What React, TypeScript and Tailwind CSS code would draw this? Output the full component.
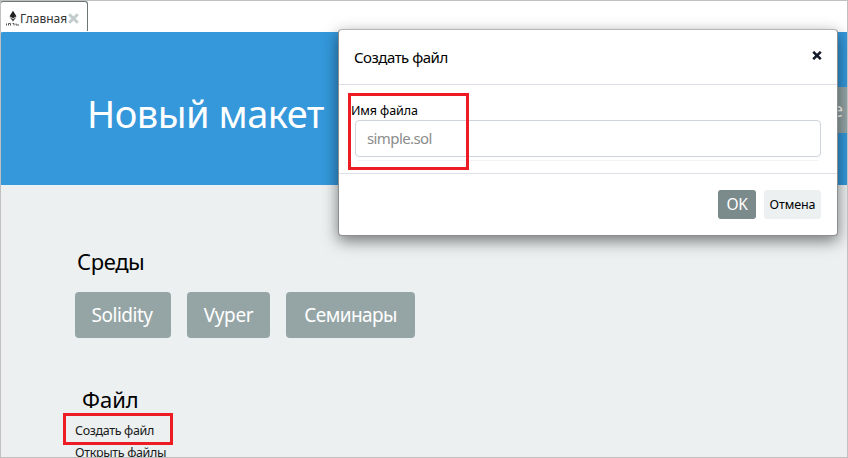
function TokenIcon() {
  return (
    <svg className="mt-[8px] h-[17px] w-[16px] shrink-0" viewBox="0 0 16 17">
      <path d="M8 0.8 L11.5 6.200 L8 8.200 L4.5 6.200 Z" fill="#222" />
      <path d="M4.5 7 L8 9.100 L11.5 7 L8 11.500 Z" fill="#444" />
      <path d="M1.500 13.500v2M3.500 15.500v-2h2v2M7.500 13.500h1.500v2M11 13.500v1.500h3" stroke="#444" strokeWidth="0.900" fill="none" />
    </svg>
  );
}

function Tab() {
  return (
    <div className="flex h-[30px] w-[88px] rounded-t-[3px] border border-b-0 border-[#6c7676] bg-white pl-[4px]">
      <TokenIcon />
      <span className="-ml-px mt-[7px] w-[48px] whitespace-nowrap text-[12px] leading-[20px] text-[#333]">Главная</span>
      <svg className="mt-[11px] h-[11px] w-[11px] shrink-0" viewBox="0 0 11 11">
        <path d="M1.200 1.200l8.600 8.600M9.800 1.200l-8.600 8.600" stroke="#c3cbcd" strokeWidth="2.900" />
      </svg>
    </div>
  );
}

function Dialog() {
  return (
    <div className="absolute left-[338px] top-[29px] flex h-[207px] w-[500px] flex-col rounded-[4px] border border-[#8b8d8e] border-t-[#b5b5b5] bg-white shadow-[0_5px_15px_rgba(0,0,0,0.500)]">
      <header className="flex h-[55px] shrink-0 justify-between border-b border-[#dde1e7] px-[15px]">
        <h2 className="mt-[15px] text-[15px] leading-[24px] tracking-[-0.5px]">Создать файл</h2>
        <svg className="mt-[21px] h-[9px] w-[10px]" viewBox="0 0 10 9">
          <path d="M1.200 0.800l7.600 7.400M8.800 0.800l-7.600 7.400" stroke="#151b2b" strokeWidth="2.500" />
        </svg>
      </header>
      <div className="flex h-[89px] shrink-0 flex-col border-b border-[#dde1e7] px-[16px]">
        <label className="-ml-[4px] mt-[16px] h-[19px] text-[12.500px] leading-[20px] tracking-[-0.1px]">Имя файла</label>
        <div className="h-[37px] rounded-[4px] border border-[#ced4da] pl-[11px] text-[15px] leading-[35px] tracking-[-0.6px] text-[#8c8c8c]">simple.sol</div>
        <div className="mx-[2px] mt-[3px] h-px bg-[#f1f3f5]" />
      </div>
      <footer className="flex justify-end gap-[8px] pr-[16px] pt-[16px]">
        <button className="h-[29px] w-[38px] rounded-[3px] bg-[#7b8a8b] text-[15.500px] leading-[29px] tracking-[-0.3px] text-white">OK</button>
        <button className="h-[29px] w-[57px] rounded-[3px] bg-[#ecf0f1] text-[12.500px] leading-[29px] tracking-[-0.1px]">Отмена</button>
      </footer>
    </div>
  );
}

export default function App() {
  return (
    <div className="relative h-[458px] w-[848px] overflow-hidden bg-[#ecf0f1] font-['Noto_Sans',sans-serif] text-black">
      <div className="flex h-[32px] bg-white pt-px">
        <Tab />
      </div>
      <section className="flex h-[153px] justify-between rounded-tl-[3px] bg-[#3498db]">
        <h1 className="ml-[87px] mt-[55px] whitespace-nowrap text-[38px] leading-[52px] tracking-[-0.5px] text-white">Новый макет</h1>
        <div className="mt-[55px] h-[46px] w-[60px] bg-[#95a5a6] pr-[5px] text-right text-[19px] leading-[46px] text-white">ие</div>
      </section>
      <main className="pl-[75px]">
        <h2 className="ml-[2px] mt-[60px] text-[22px] leading-[32px] tracking-[-0.4px]">Среды</h2>
        <div className="mt-[15px] flex gap-[16px] text-[19px] leading-[46px] text-white">
          <button className="h-[46px] w-[96px] rounded-[4px] bg-[#95a5a6] pr-[2px] tracking-[-0.5px]">Solidity</button>
          <button className="h-[46px] w-[83px] rounded-[4px] bg-[#95a5a6] tracking-[-0.4px]">Vyper</button>
          <button className="h-[46px] w-[129px] rounded-[4px] bg-[#95a5a6] tracking-[-0.6px]">Семинары</button>
        </div>
        <h2 className="ml-[7px] mt-[45px] text-[22px] leading-[32px]">Файл</h2>
        <div className="mt-[5px] text-[12.500px] leading-[22px] tracking-[-0.350px] text-[#1a1a1a]">
          <p className="h-[22px]">Создать файл</p>
          <p className="h-[19px]">Открыть файлы</p>
        </div>
      </main>
      <Dialog />
      <div className="absolute left-[348px] top-[93px] h-[77px] w-[121px] border-[3px] border-[#ed1c24]" />
      <div className="absolute left-[63px] top-[413px] h-[32px] w-[110px] border-[3px] border-[#ed1c24]" />
      <div className="pointer-events-none absolute inset-0 border border-[#c0c0c0]" />
    </div>
  );
}
